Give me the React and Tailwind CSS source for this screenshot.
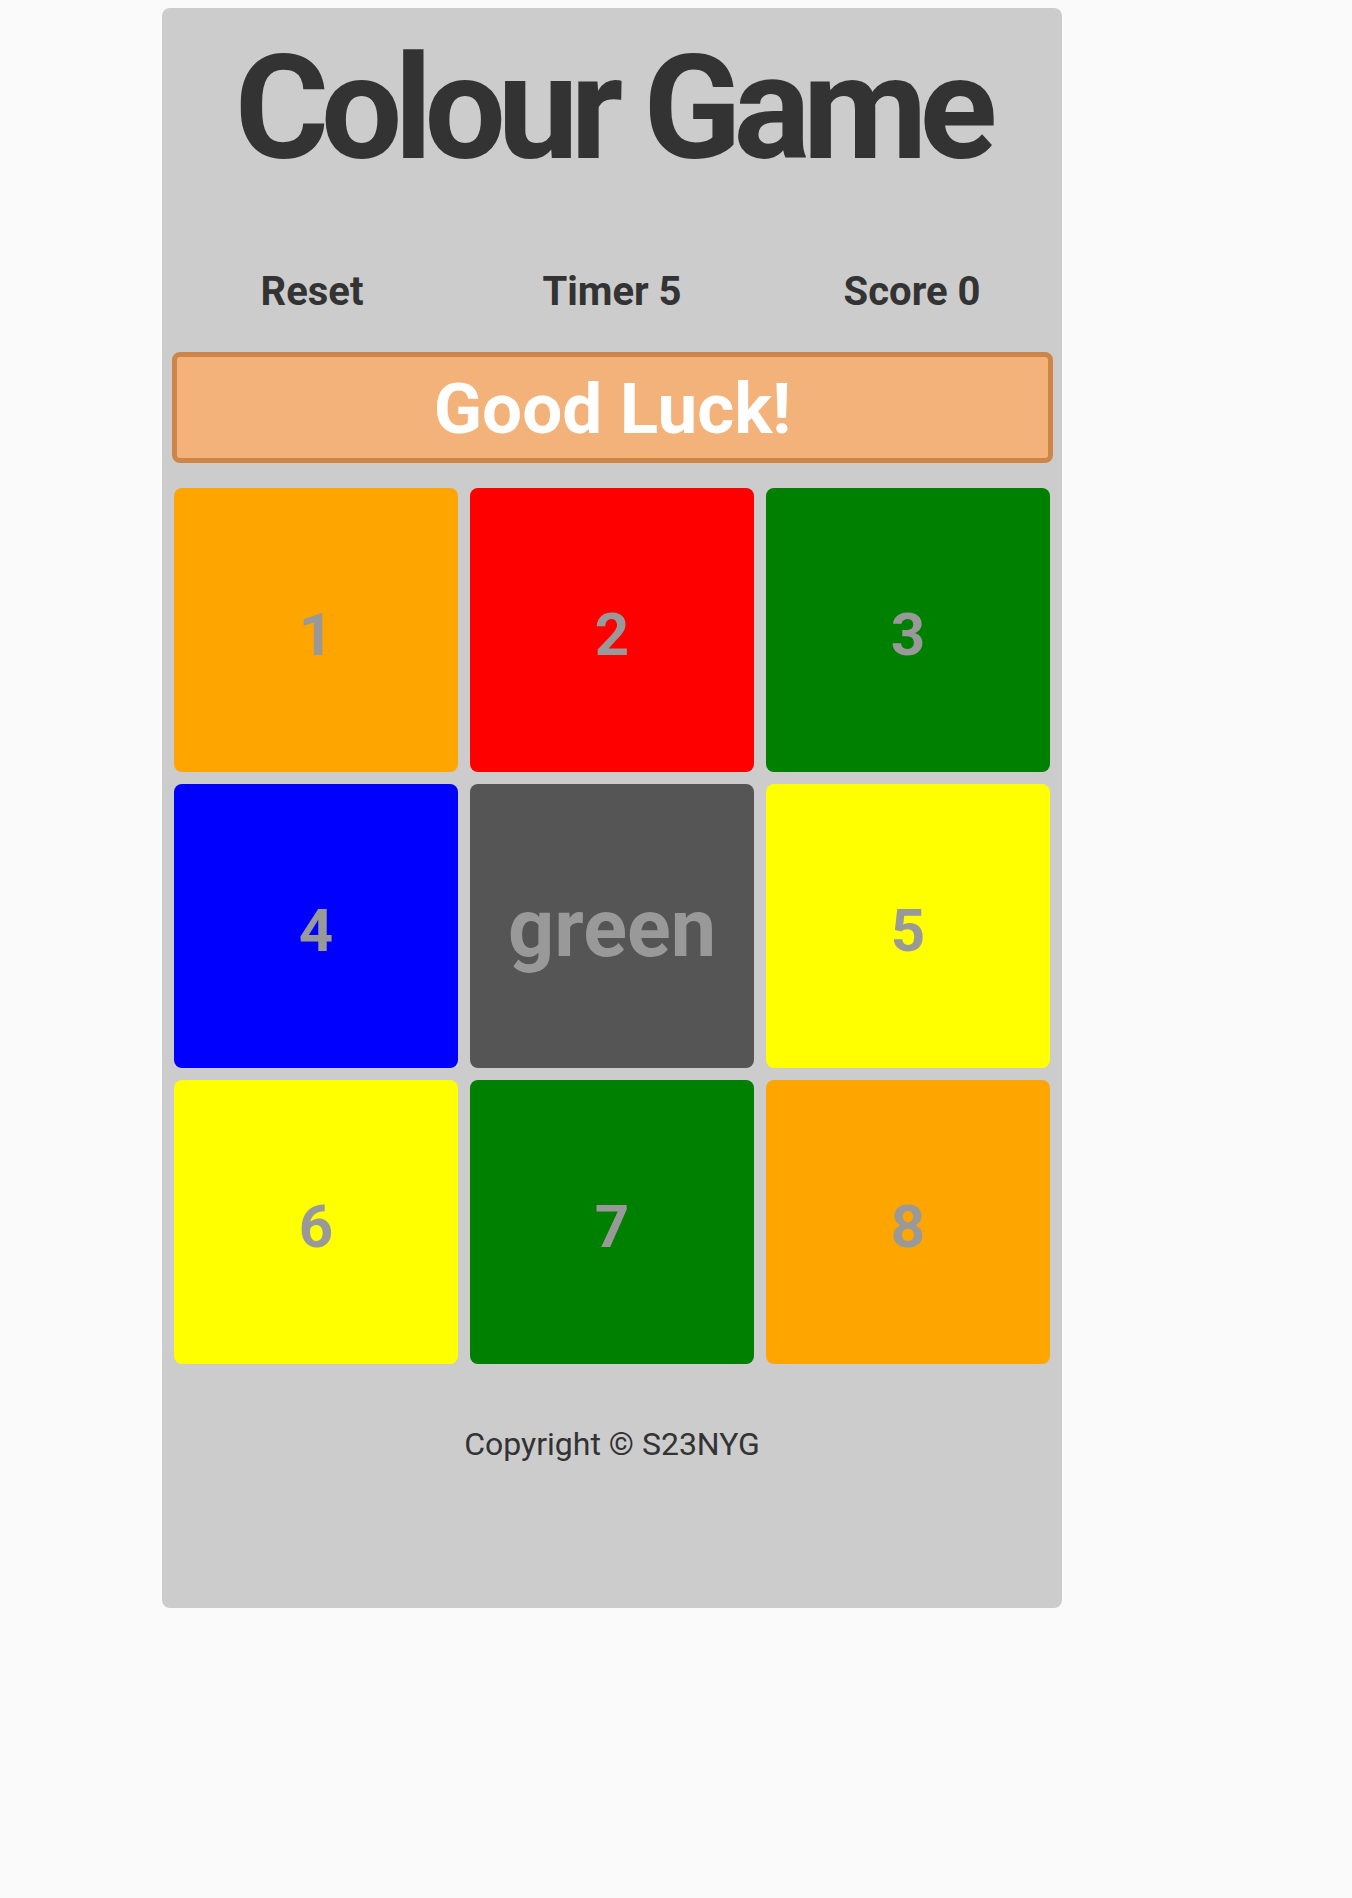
import React from "react";

const tiles = [
  { label: "1", bg: "bg-[#ffa500]" },
  { label: "2", bg: "bg-[#ff0000]" },
  { label: "3", bg: "bg-[#008000]" },
  { label: "4", bg: "bg-[#0000ff]" },
  { label: "green", bg: "bg-[#555555]", big: true },
  { label: "5", bg: "bg-[#ffff00]" },
  { label: "6", bg: "bg-[#ffff00]" },
  { label: "7", bg: "bg-[#008000]" },
  { label: "8", bg: "bg-[#ffa500]" },
];

export default function App() {
  return (
    <div className="min-h-[1898px] bg-[#fafafa] pt-2 font-['Roboto',sans-serif]">
      <div className="ml-[162px] w-[900px] h-[1600px] rounded-lg bg-[#cccccc] flex flex-col">
        <h1 className="pt-[29px] text-center text-[144px] leading-none font-bold tracking-[-0.055em] text-[#333333]">
          Colour Game
        </h1>
        <div className="mt-[91px] grid grid-cols-3 text-[40px] leading-none font-bold text-[#333333] text-center">
          <div>Reset</div>
          <div>Timer 5</div>
          <div>Score 0</div>
        </div>
        <div className="mt-[40px] ml-[10px] mr-[9px] rounded-lg border-[5px] border-[#cd8548] bg-[#f3b27a] pt-[11px] pb-[8px] text-center text-[71px] leading-[82px] font-bold text-white">
          Good Luck!
        </div>
        <div className="mt-[25px] px-3 grid grid-cols-3 gap-3">
          {tiles.map((t) => (
            <div
              key={t.label}
              className={`${t.bg} h-[284px] rounded-lg flex items-center justify-center leading-none font-bold text-[#999999] ${t.big ? "text-[81px] pt-[5px]" : "text-[60px] pt-[9px]"}`}
            >
              {t.label}
            </div>
          ))}
        </div>
        <div className="mt-[64px] text-center text-[32px] leading-none text-[#333333]">
          Copyright © S23NYG
        </div>
      </div>
    </div>
  );
}
